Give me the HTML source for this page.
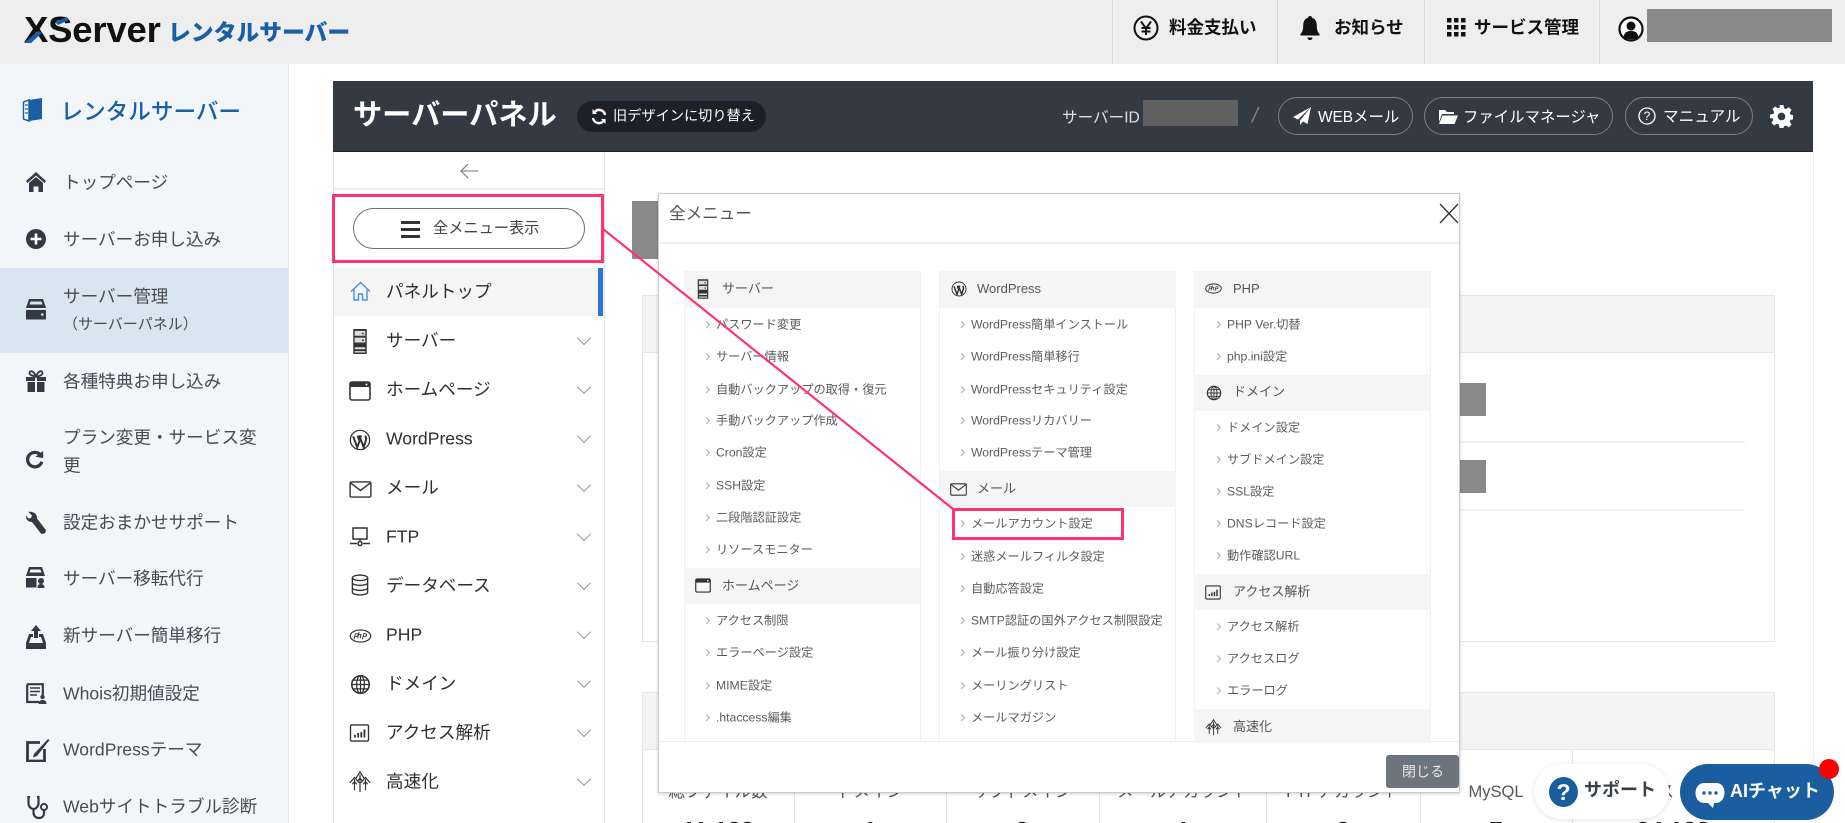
<!DOCTYPE html>
<html lang="ja"><head><meta charset="utf-8"><title>XServer</title>
<style>
html,body{margin:0;padding:0;width:1845px;height:823px;overflow:hidden;background:#fff}
body{position:relative;font-family:"Liberation Sans","Noto Sans CJK JP",sans-serif;color:#333}
.b,.t,.i,.h,svg.a{position:absolute}
.t,.i,.h{white-space:nowrap;transform:translateY(-50%);line-height:1.2}
.s{font-size:17.6px;color:#484c52;left:63px;margin-top:1px}
.n{font-size:17.6px;color:#2c2f33;left:386px;margin-top:1px}
.top{font-size:17.5px;font-weight:700;color:#111;margin-top:1px}
.wbtn{position:absolute;top:97px;height:36px;border:1px solid #7b8087;border-radius:19px;box-sizing:content-box}
.w{color:#fff}
.i{font-size:12.2px;color:#5c5c5c}
.i::before{content:"";position:absolute;left:-12.5px;top:50%;width:4px;height:4px;border-top:1px solid #aaa;border-right:1px solid #aaa;transform:translateY(-50%) rotate(45deg)}
.hd{position:absolute;width:237px;background:#f5f5f5}
.h{font-size:13px;color:#555}
.lab{font-size:16.5px;color:#555;transform:translate(-50%,-50%)}
.val{font-size:24px;font-weight:700;color:#222;transform:translate(-50%,-50%)}
.chev{position:absolute;left:579px;width:9px;height:9px;margin-top:-1px;border-right:1px solid #999;border-bottom:1px solid #999;transform:rotate(45deg)}
</style></head><body>
<svg width="0" height="0" style="position:absolute"><defs>
<symbol id="srv" viewBox="0 0 16 26"><path fill="#333" d="M1 0h14v26H1z"/><path fill="#ddd" d="M2.500 2h11v5h-11zM2.500 9h11v5h-11zM2.500 19h11v2h-11zM2.500 23h11v1.500h-11z"/><path fill="#333" d="M10 4h2v1.500h-2zM10 11h2v1.500h-2z"/></symbol>
<symbol id="win" viewBox="0 0 22 20"><rect x="1" y="1" width="20" height="18" rx="2" fill="none" stroke="#333" stroke-width="1.600"/><path fill="#333" d="M1 1h20v5H1z"/><circle cx="17.500" cy="3.500" r="1" fill="#fff"/></symbol>
<symbol id="wp" viewBox="0 0 24 24"><circle cx="12" cy="12" r="10.500" fill="none" stroke="#333" stroke-width="1.400"/><path d="M4.500 8 9 20 11.500 13 9.500 8M9 8h5M11.500 8 16 20l2.500-8c.7-2-.2-3.500-1-4.500" fill="none" stroke="#333" stroke-width="2.200"/></symbol>
<symbol id="mail" viewBox="0 0 24 18"><rect x="1" y="1" width="22" height="16" rx="1.500" fill="none" stroke="#333" stroke-width="1.500"/><path d="M1.500 2 12 10 22.500 2" fill="none" stroke="#333" stroke-width="1.500"/></symbol>
<symbol id="ftp" viewBox="0 0 20 20"><rect x="3" y="1" width="14" height="11" fill="none" stroke="#333" stroke-width="1.500"/><path d="M10 12v3M0 16.500h7M13 16.500h7" stroke="#333" stroke-width="1.500"/><circle cx="10" cy="16.500" r="2" fill="none" stroke="#333" stroke-width="1.500"/></symbol>
<symbol id="db" viewBox="0 0 20 24"><ellipse cx="10" cy="4" rx="8.500" ry="3" fill="none" stroke="#333" stroke-width="1.500"/><path d="M1.500 4v16c0 1.700 3.800 3 8.500 3s8.500-1.300 8.500-3V4M1.500 9.500c0 1.700 3.800 3 8.500 3s8.500-1.300 8.500-3M1.500 15c0 1.700 3.800 3 8.500 3s8.500-1.300 8.500-3" fill="none" stroke="#333" stroke-width="1.500"/></symbol>
<symbol id="php" viewBox="0 0 24 15"><ellipse cx="12" cy="7.500" rx="11" ry="6.500" fill="none" stroke="#333" stroke-width="1.300"/><path d="M5 11 6.500 5h2c1.500 0 1.500 3-1 3H6M10.500 3l-1.500 7M10 6h2.500l-.8 4M14 11l1.500-6h2c1.500 0 1.500 3-1 3H15" fill="none" stroke="#333" stroke-width="1"/></symbol>
<symbol id="glb" viewBox="0 0 24 24"><circle cx="12" cy="12" r="10" fill="none" stroke="#333" stroke-width="1.800"/><ellipse cx="12" cy="12" rx="4.500" ry="10" fill="none" stroke="#333" stroke-width="1.400"/><path d="M2 12h20M3.500 7h17M3.500 17h17M12 2v20" stroke="#333" stroke-width="1.400"/></symbol>
<symbol id="chart" viewBox="0 0 22 20"><rect x="1" y="1" width="20" height="18" rx="1.500" fill="none" stroke="#333" stroke-width="1.500"/><path fill="#333" d="M5 12h2v3H5zM8.500 10h2v5h-2zM12 9h2v6h-2zM15.500 6h2v9h-2z"/></symbol>
<symbol id="spd" viewBox="0 0 24 24"><path d="M1 13 6 7l5 6M7.500 8 12 1l4.500 7M13 13l5-6 5 6M6 9v12M12 4v19M18 9v12M3.500 14.500 6 11.500l2.500 3M9.500 11 12 7.500l2.500 3.500M15.500 14.500l2.500-3 2.500 3" fill="none" stroke="#333" stroke-width="1.300"/></symbol>
</defs></svg>

<!-- top bar -->
<div class="b" style="left:0;top:0;width:1845px;height:64px;background:#eee"></div>
<div class="b" style="left:1112px;top:0;width:1px;height:64px;background:#d8d8d8"></div>
<div class="b" style="left:1277px;top:0;width:1px;height:64px;background:#d8d8d8"></div>
<div class="b" style="left:1424px;top:0;width:1px;height:64px;background:#d8d8d8"></div>
<div class="b" style="left:1599px;top:0;width:1px;height:64px;background:#d8d8d8"></div>
<div class="t" style="left:24px;top:30px;font-size:36.5px;font-weight:700;color:#111;letter-spacing:-.2px">XServer</div>
<svg class="a" style="left:20px;top:14px" width="60" height="32" viewBox="0 0 60 32"><path d="M4 29 18 17l4 2L11 29z" fill="#1a5ea5"/><path d="M35 8 47 3l2 3-11 5z" fill="#1a5ea5"/></svg>
<div class="t" style="left:168px;top:33px;font-size:22.8px;font-weight:900;color:#1a5ea5">レンタルサーバー</div>

<svg class="a" style="left:1133px;top:15px" width="26" height="26" viewBox="0 0 26 26"><circle cx="13" cy="13" r="11.500" fill="none" stroke="#111" stroke-width="2"/><path d="M8 6.500l5 7 5-7M13 13.500V20M8.500 13h9M8.500 16.500h9" fill="none" stroke="#111" stroke-width="2"/></svg>
<div class="t top" style="left:1169px;top:27px">料金支払い</div>
<svg class="a" style="left:1300px;top:15px" width="20" height="26" viewBox="0 0 20 26"><path d="M10 1c1.200 0 2 .8 2 1.800 3.500 1 4.800 4 4.800 8 0 4 .7 6 2.700 8.200v1.500H.5V19c2-2.200 2.700-4.200 2.700-8.200s1.300-7 4.800-8C8 1.800 8.800 1 10 1zM7.500 22.500h5c0 1.500-1 2.500-2.500 2.500s-2.500-1-2.500-2.500z" fill="#111"/></svg>
<div class="t top" style="left:1334px;top:27px">お知らせ</div>
<svg class="a" style="left:1447px;top:18px" width="19" height="19" viewBox="0 0 19 19"><path fill="#111" d="M0 0h4.500v4.500H0zM7 0h4.500v4.500H7zM14 0h4.500v4.500H14zM0 7h4.500v4.500H0zM7 7h4.500v4.500H7zM14 7h4.500v4.500H14zM0 14h4.500v4.500H0zM7 14h4.500v4.500H7zM14 14h4.500v4.500H14z"/></svg>
<div class="t top" style="left:1474px;top:27px">サービス管理</div>
<svg class="a" style="left:1618px;top:16px" width="26" height="26" viewBox="0 0 26 26"><circle cx="13" cy="13" r="11.500" fill="#fff" stroke="#111" stroke-width="2.200"/><circle cx="13" cy="10" r="4.500" fill="#111"/><path d="M5.500 21c1-5 4-6 7.500-6s6.500 1 7.500 6c-4 3-11 3-15 0z" fill="#111"/></svg>
<div class="b" style="left:1647px;top:9px;width:185px;height:33px;background:#8a8a8a"></div>

<!-- sidebar -->
<div class="b" style="left:0;top:64px;width:288px;height:759px;background:#f2f6f9;border-right:1px solid #e6eaee"></div>
<div class="b" style="left:0;top:268px;width:288px;height:85px;background:#d9e6f2"></div>
<svg class="a" style="left:22px;top:97px" width="21" height="25" viewBox="0 0 21 25"><path d="M7 3 20 1v21L7 24z" fill="#1a5ea5"/><path d="M7 3 1.500 5v17L7 24z" fill="#fff" stroke="#1a5ea5" stroke-width="1.500"/><path d="M3 8h3M3 12h3M3 16h3" stroke="#1a5ea5" stroke-width="1.300"/></svg>
<div class="t" style="left:60.500px;top:112px;font-size:22.6px;font-weight:500;color:#1a5ea5">レンタルサーバー</div>

<svg class="a" style="left:26px;top:172px" width="20" height="20" viewBox="0 0 20 20"><path fill="#343a43" d="M10 0 20 9l-1.500 2L10 3.500 1.500 11 0 9zM3 11l7-6 7 6v9h-4.500v-5.500h-5V20H3z"/></svg>
<div class="t s" style="top:182px">トップページ</div>
<svg class="a" style="left:26px;top:229px" width="20" height="20" viewBox="0 0 20 20"><circle cx="10" cy="10" r="10" fill="#343a43"/><path d="M10 4.500v11M4.500 10h11" stroke="#fff" stroke-width="2.600"/></svg>
<div class="t s" style="top:239px">サーバーお申し込み</div>
<svg class="a" style="left:26px;top:299px" width="20" height="22" viewBox="0 0 20 22"><path fill="#343a43" d="M3 0h14l3 9H0zM0 11h20v9.500H0z"/><path fill="#d9e6f2" d="M4.500 2.500h11l1 3h-13z"/><path fill="#d9e6f2" d="M15 14.500h2.500v2H15z"/></svg>
<div class="t s" style="top:296px">サーバー管理</div>
<div class="t s" style="top:324px;left:63px;font-size:15px">（サーバーパネル）</div>
<svg class="a" style="left:26px;top:370px" width="20" height="22" viewBox="0 0 20 22"><path fill="#343a43" d="M0 7h9v4H0zM11 7h9v4h-9zM1.500 12H9v10H1.500zM11 12h7.500v10H11z"/><path d="M10 6.500C8 1 4 0 3.500 2.500S7 6 10 6.500c3 0 7-1.500 6.500-4S12 1 10 6.500z" fill="none" stroke="#343a43" stroke-width="1.800"/></svg>
<div class="t s" style="top:381px">各種特典お申し込み</div>
<svg class="a" style="left:26px;top:450px" width="18" height="19" viewBox="0 0 19 21"><path d="M15.500 5.500A8 8 0 1 0 17 13" fill="none" stroke="#343a43" stroke-width="3.600"/><path d="M10 7.500 18.500 9V1z" fill="#343a43"/></svg>
<div class="t s" style="top:437px">プラン変更・サービス変</div>
<div class="t s" style="top:465px">更</div>
<svg class="a" style="left:26px;top:511px" width="20" height="23" viewBox="0 0 20 23"><path d="M2.500 1 6 4.500 5 7 2.500 7.500 0 4.500C-.5 8 2 11 6 11l8.500 11c1 1.200 2.500 1.200 4 .2s1.800-2.500 1-3.700L11 7.500C11.500 3 7 0 2.500 1z" fill="#343a43"/></svg>
<div class="t s" style="top:522px">設定おまかせサポート</div>
<svg class="a" style="left:26px;top:567px" width="20" height="22" viewBox="0 0 20 22"><path fill="#343a43" d="M3 0h13l3 9H0zM0 11h10.500v9.500H0z"/><path fill="#f2f6f9" d="M4.500 2.500h10l1 3h-12z"/><circle cx="15" cy="14" r="3" fill="#343a43"/><path fill="#343a43" d="M11.500 21c0-3 1.500-4 3.500-4s3.500 1 3.500 4z"/></svg>
<div class="t s" style="top:578px">サーバー移転代行</div>
<svg class="a" style="left:26px;top:625px" width="20" height="24" viewBox="0 0 20 24"><path fill="#343a43" d="M10 0l5 6h-3v7H8V6H5zM3 9h4v3H5l-2 6h14l-2-6h-2V9h4l3 9v6H0v-6z"/></svg>
<div class="t s" style="top:635px">新サーバー簡単移行</div>
<svg class="a" style="left:26px;top:683px" width="21" height="21" viewBox="0 0 21 21"><path d="M1.200 1.200h15.600v11M13 19H1.200V1.200" fill="none" stroke="#343a43" stroke-width="2.200"/><path d="M4 5h10M4 8.500h10M4 12h7" stroke="#343a43" stroke-width="1.500"/><circle cx="16.500" cy="14" r="2.200" fill="#343a43"/><path fill="#343a43" d="M12.500 21c0-3 2-4 4-4s4 1 4 4z"/></svg>
<div class="t s" style="top:693px">Whois初期値設定</div>
<svg class="a" style="left:26px;top:738px" width="24" height="24" viewBox="0 0 24 24"><path d="M14 4.500H1.500V23h17V11" fill="none" stroke="#343a43" stroke-width="2.800"/><path d="M8 16 22 1l1.500 1L11 18l-4 1.500z" fill="#343a43"/></svg>
<div class="t s" style="top:749px">WordPressテーマ</div>
<svg class="a" style="left:27px;top:796px" width="21" height="24" viewBox="0 0 21 24"><path d="M3 1H1.500v6c0 3.500 2.500 6 5 6s5-2.500 5-6V1H10M6.500 13v3.500c0 3 2 5.500 5.500 5.500s5-2.500 5-5v-3" fill="none" stroke="#343a43" stroke-width="2.200"/><circle cx="17" cy="11" r="3" fill="none" stroke="#343a43" stroke-width="2"/></svg>
<div class="t s" style="top:806px">Webサイトトラブル診断</div>

<!-- dark panel -->
<div class="b" style="left:333px;top:81px;width:1480px;height:71px;background:#343a43;border-bottom:1px solid #23272d;box-sizing:border-box"></div>
<div class="t w" style="left:353px;top:116px;font-size:29.2px;font-weight:700">サーバーパネル</div>
<div class="b" style="left:577px;top:101px;width:189px;height:31px;border-radius:16px;background:#1d2127"></div>
<svg class="a" style="left:590px;top:107px" width="18" height="19" viewBox="0 0 18 19"><path d="M15 8a6 6 0 0 0-10-3.500M3 11a6 6 0 0 0 10 3.500" fill="none" stroke="#fff" stroke-width="2.400"/><path d="M2.500 2 7 7H2.500zM15.500 17 11 12h4.500z" fill="#fff"/></svg>
<div class="t w" style="left:613px;top:117px;font-size:14.2px">旧デザインに切り替え</div>
<div class="t" style="left:1062px;top:118.500px;font-size:15.6px;color:#dfe1e4">サーバーID</div>
<div class="b" style="left:1143px;top:100px;width:95px;height:26px;background:#606060"></div>
<div class="t" style="left:1252px;top:116px;font-size:21px;font-style:italic;color:#7b8087">/</div>
<div class="wbtn" style="left:1278px;width:133px"></div>
<svg class="a" style="left:1293px;top:107px" width="18" height="18" viewBox="0 0 18 18"><path d="M18 0 0 10l5 2.500L18 0 7 13.500V18l3-3.500 4.500 2.500z" fill="#fff"/></svg>
<div class="t w" style="left:1318px;top:118px;font-size:15.4px">WEBメール</div>
<div class="wbtn" style="left:1424px;width:187px"></div>
<svg class="a" style="left:1438px;top:109px" width="20" height="16" viewBox="0 0 20 16"><path d="M1 1h6l2 2h7v2H4L1 13zM4.500 6.500H20L16.500 15H1z" fill="#fff"/></svg>
<div class="t w" style="left:1463px;top:118px;font-size:15.4px">ファイルマネージャ</div>
<div class="wbtn" style="left:1625px;width:126px"></div>
<svg class="a" style="left:1638px;top:107px" width="18" height="18" viewBox="0 0 18 18"><circle cx="9" cy="9" r="8" fill="none" stroke="#fff" stroke-width="1.300"/><text x="9" y="13" font-size="12" text-anchor="middle" fill="#fff" font-family="Liberation Sans">?</text></svg>
<div class="t w" style="left:1663px;top:118px;font-size:15.6px">マニュアル</div>
<svg class="a" style="left:1770px;top:105px" width="23" height="23" viewBox="0 0 24 24"><path fill="#fff" fill-rule="evenodd" d="M10 0h4l.7 3.400 2 .8L19.700 2.300l2.800 2.800-1.900 3 .8 2 3.600.7v4l-3.600.7-.8 2 1.900 3-2.800 2.800-3-1.900-2 .8L14 24h-4l-.7-3.700-2-.8-3 1.900-2.800-2.800 1.900-3-.8-2L0 14v-4l3.600-.7.800-2-1.900-3L5.300 1.500l3 1.900 2-.8zM12 8a4 4 0 1 0 0 8 4 4 0 0 0 0-8z"/></svg>

<!-- left nav -->
<div class="b" style="left:333px;top:152px;width:270px;height:671px;border-left:1px solid #e3e3e3;border-right:1px solid #e3e3e3"></div>
<div class="b" style="left:1813px;top:152px;width:1px;height:671px;background:#ececec"></div>
<svg class="a" style="left:460px;top:163px" width="18" height="16" viewBox="0 0 18 16"><path d="M8 1 1 8l7 7M1 8h17" fill="none" stroke="#777" stroke-width="1.100"/></svg>
<div class="b" style="left:334px;top:188px;width:270px;height:2px;background:#eee"></div>
<div class="b" style="left:353px;top:208px;width:232px;height:41px;box-sizing:border-box;border:1px solid #6b6f75;border-radius:21px;background:#fff"></div>
<div class="b" style="left:401px;top:221px;width:19px;height:3px;background:#333"></div>
<div class="b" style="left:401px;top:228px;width:19px;height:3px;background:#333"></div>
<div class="b" style="left:401px;top:235px;width:19px;height:3px;background:#333"></div>
<div class="t" style="left:433px;top:229px;font-size:15.2px;color:#444">全メニュー表示</div>

<div class="b" style="left:334px;top:268px;width:270px;height:48px;background:#f5f5f5"></div>
<div class="b" style="left:598px;top:268px;width:5px;height:48px;background:#2a76d8"></div>
<svg class="a" style="left:350px;top:281px" width="21" height="20" viewBox="0 0 21 20"><path d="M1 10.500 10.500 1.500 20 10.500M4 8.500V19h4.500v-6h4v6H17V8.500" fill="none" stroke="#4a90d9" stroke-width="1.400"/></svg>
<div class="t n" style="top:291px">パネルトップ</div>

<svg class="a" style="left:352px;top:329px" width="16" height="25"><use href="#srv"/></svg>
<div class="t n" style="top:340px">サーバー</div><div class="chev" style="top:334px"></div>
<svg class="a" style="left:349px;top:381px" width="22" height="20"><use href="#win"/></svg>
<div class="t n" style="top:389px">ホームページ</div><div class="chev" style="top:383px"></div>
<svg class="a" style="left:349px;top:429px" width="22" height="22"><use href="#wp"/></svg>
<div class="t n" style="top:437.500px">WordPress</div><div class="chev" style="top:432px"></div>
<svg class="a" style="left:349px;top:481px" width="23" height="17"><use href="#mail"/></svg>
<div class="t n" style="top:487px">メール</div><div class="chev" style="top:481px"></div>
<svg class="a" style="left:350px;top:527px" width="20" height="20"><use href="#ftp"/></svg>
<div class="t n" style="top:536px">FTP</div><div class="chev" style="top:530px"></div>
<svg class="a" style="left:351px;top:574px" width="18" height="22"><use href="#db"/></svg>
<div class="t n" style="top:585px">データベース</div><div class="chev" style="top:579px"></div>
<svg class="a" style="left:349px;top:629px" width="23" height="14"><use href="#php"/></svg>
<div class="t n" style="top:634px">PHP</div><div class="chev" style="top:628px"></div>
<svg class="a" style="left:350px;top:674px" width="21" height="21"><use href="#glb"/></svg>
<div class="t n" style="top:683px">ドメイン</div><div class="chev" style="top:677px"></div>
<svg class="a" style="left:349px;top:724px" width="21" height="18"><use href="#chart"/></svg>
<div class="t n" style="top:732px">アクセス解析</div><div class="chev" style="top:726px"></div>
<svg class="a" style="left:349px;top:771px" width="22" height="22"><use href="#spd"/></svg>
<div class="t n" style="top:781px">高速化</div><div class="chev" style="top:775px"></div>

<!-- background content -->
<div class="b" style="left:632px;top:201px;width:27px;height:58px;background:#8a8a8a"></div>
<div class="b" style="left:642px;top:295px;width:1133px;height:347px;box-sizing:border-box;border:1px solid #e6e6e6"></div>
<div class="b" style="left:643px;top:296px;width:1131px;height:56px;background:#f4f4f4;border-bottom:1px solid #e8e8e8"></div>
<div class="b" style="left:1455px;top:383px;width:31px;height:33px;background:#8a8a8a"></div>
<div class="b" style="left:1455px;top:460px;width:31px;height:33px;background:#8a8a8a"></div>
<div class="b" style="left:1455px;top:441px;width:290px;height:2px;background:#f2f2f2"></div>
<div class="b" style="left:1455px;top:509px;width:290px;height:2px;background:#f4f4f4"></div>
<div class="b" style="left:642px;top:692px;width:1133px;height:131px;box-sizing:border-box;border:1px solid #e6e6e6;border-bottom:0"></div>
<div class="b" style="left:643px;top:693px;width:1131px;height:56px;background:#f4f4f4;border-bottom:1px solid #e8e8e8"></div>
<div class="b" style="left:794px;top:750px;width:1px;height:73px;background:#e6e6e6"></div>
<div class="b" style="left:946px;top:750px;width:1px;height:73px;background:#e6e6e6"></div>
<div class="b" style="left:1099px;top:750px;width:1px;height:73px;background:#e6e6e6"></div>
<div class="b" style="left:1266px;top:750px;width:1px;height:73px;background:#e6e6e6"></div>
<div class="b" style="left:1420px;top:750px;width:1px;height:73px;background:#e6e6e6"></div>
<div class="b" style="left:1572px;top:750px;width:1px;height:73px;background:#e6e6e6"></div>
<div class="t lab" style="left:718px;top:793px">総ファイル数</div>
<div class="t lab" style="left:870px;top:793px">ドメイン</div>
<div class="t lab" style="left:1022px;top:793px">サブドメイン</div>
<div class="t lab" style="left:1183px;top:793px">メールアカウント</div>
<div class="t lab" style="left:1343px;top:793px">FTPアカウント</div>
<div class="t lab" style="left:1496px;top:793px">MySQL</div>
<div class="t lab" style="left:1625px;top:793px">データベース</div>
<div class="t val" style="left:718px;top:832px">11,133</div>
<div class="t val" style="left:870px;top:832px">1</div>
<div class="t val" style="left:1022px;top:832px">3</div>
<div class="t val" style="left:1183px;top:832px">1</div>
<div class="t val" style="left:1343px;top:832px">3</div>
<div class="t val" style="left:1496px;top:832px">7</div>
<div class="t val" style="left:1673px;top:832px">34,133</div>

<!-- modal -->
<div class="b" style="left:658px;top:193px;width:802px;height:600px;box-sizing:border-box;background:#fff;border:1px solid #ccc;box-shadow:0 1px 3px rgba(0,0,0,.18)"></div>
<div class="t" style="left:669px;top:214px;font-size:16.6px;color:#555">全メニュー</div>
<svg class="a" style="left:1439px;top:203px" width="20" height="21" viewBox="0 0 20 21"><path d="M1 1 19 20M19 1 1 20" stroke="#333" stroke-width="1.300" fill="none"/></svg>
<div class="b" style="left:659px;top:242px;width:800px;height:2px;background:#f0f0f0"></div>

<div class="b" style="left:684px;top:271px;width:237px;height:470px;box-sizing:border-box;border:1px solid #f0f0f0;border-bottom:0"></div>
<div class="b" style="left:939px;top:271px;width:237px;height:470px;box-sizing:border-box;border:1px solid #f0f0f0;border-bottom:0"></div>
<div class="b" style="left:1194px;top:271px;width:237px;height:470px;box-sizing:border-box;border:1px solid #f0f0f0;border-bottom:0"></div>

<!-- col1 -->
<div class="hd" style="left:684px;top:271px;height:37px"></div>
<svg class="a" style="left:697px;top:279px" width="12" height="20"><use href="#srv"/></svg>
<div class="t h" style="left:722px;top:289px">サーバー</div>
<div class="t i" style="left:716px;top:325px">パスワード変更</div>
<div class="t i" style="left:716px;top:357px">サーバー情報</div>
<div class="t i" style="left:716px;top:390px">自動バックアップの取得・復元</div>
<div class="t i" style="left:716px;top:421px">手動バックアップ作成</div>
<div class="t i" style="left:716px;top:453px">Cron設定</div>
<div class="t i" style="left:716px;top:486px">SSH設定</div>
<div class="t i" style="left:716px;top:518px">二段階認証設定</div>
<div class="t i" style="left:716px;top:550px">リソースモニター</div>
<div class="hd" style="left:684px;top:568px;height:36px"></div>
<svg class="a" style="left:695px;top:578px" width="16" height="15"><use href="#win"/></svg>
<div class="t h" style="left:722px;top:586px">ホームページ</div>
<div class="t i" style="left:716px;top:621px">アクセス制限</div>
<div class="t i" style="left:716px;top:653px">エラーページ設定</div>
<div class="t i" style="left:716px;top:686px">MIME設定</div>
<div class="t i" style="left:716px;top:718px">.htaccess編集</div>

<!-- col2 -->
<div class="hd" style="left:939px;top:271px;height:37px"></div>
<svg class="a" style="left:951px;top:281px" width="16" height="16"><use href="#wp"/></svg>
<div class="t h" style="left:977px;top:289px">WordPress</div>
<div class="t i" style="left:971px;top:325px">WordPress簡単インストール</div>
<div class="t i" style="left:971px;top:357px">WordPress簡単移行</div>
<div class="t i" style="left:971px;top:390px">WordPressセキュリティ設定</div>
<div class="t i" style="left:971px;top:421px">WordPressリカバリー</div>
<div class="t i" style="left:971px;top:453px">WordPressテーマ管理</div>
<div class="hd" style="left:939px;top:471px;height:36px"></div>
<svg class="a" style="left:950px;top:483px" width="17" height="13"><use href="#mail"/></svg>
<div class="t h" style="left:977px;top:489px">メール</div>
<div class="t i" style="left:971px;top:524px">メールアカウント設定</div>
<div class="t i" style="left:971px;top:557px">迷惑メールフィルタ設定</div>
<div class="t i" style="left:971px;top:589px">自動応答設定</div>
<div class="t i" style="left:971px;top:621px">SMTP認証の国外アクセス制限設定</div>
<div class="t i" style="left:971px;top:653px">メール振り分け設定</div>
<div class="t i" style="left:971px;top:686px">メーリングリスト</div>
<div class="t i" style="left:971px;top:718px">メールマガジン</div>

<!-- col3 -->
<div class="hd" style="left:1194px;top:271px;height:37px"></div>
<svg class="a" style="left:1205px;top:283px" width="17" height="11"><use href="#php"/></svg>
<div class="t h" style="left:1233px;top:289px">PHP</div>
<div class="t i" style="left:1227px;top:325px">PHP Ver.切替</div>
<div class="t i" style="left:1227px;top:357px">php.ini設定</div>
<div class="hd" style="left:1194px;top:375px;height:36px"></div>
<svg class="a" style="left:1206px;top:385px" width="16" height="16"><use href="#glb"/></svg>
<div class="t h" style="left:1233px;top:392px">ドメイン</div>
<div class="t i" style="left:1227px;top:428px">ドメイン設定</div>
<div class="t i" style="left:1227px;top:460px">サブドメイン設定</div>
<div class="t i" style="left:1227px;top:492px">SSL設定</div>
<div class="t i" style="left:1227px;top:524px">DNSレコード設定</div>
<div class="t i" style="left:1227px;top:556px">動作確認URL</div>
<div class="hd" style="left:1194px;top:574px;height:36px"></div>
<svg class="a" style="left:1205px;top:585px" width="16" height="15"><use href="#chart"/></svg>
<div class="t h" style="left:1233px;top:592px">アクセス解析</div>
<div class="t i" style="left:1227px;top:627px">アクセス解析</div>
<div class="t i" style="left:1227px;top:659px">アクセスログ</div>
<div class="t i" style="left:1227px;top:691px">エラーログ</div>
<div class="hd" style="left:1194px;top:709px;height:32px"></div>
<svg class="a" style="left:1205px;top:719px" width="17" height="17"><use href="#spd"/></svg>
<div class="t h" style="left:1233px;top:727px">高速化</div>

<div class="b" style="left:659px;top:741px;width:800px;height:51px;background:#fff;border-top:1px solid #eee;box-sizing:border-box"></div>
<div class="b" style="left:1386px;top:755px;width:73px;height:33px;background:#6c757d;border-radius:3px"></div>
<div class="t" style="left:1402px;top:772px;font-size:14px;color:#e8e8e8">閉じる</div>

<!-- annotations -->
<svg class="a" style="left:0;top:0" width="1845" height="823"><path d="M603 229 953 509" stroke="#ff3370" stroke-width="2.200" fill="none"/></svg>
<div class="b" style="left:332px;top:194px;width:272px;height:69px;box-sizing:border-box;border:3px solid #ff3370"></div>
<div class="b" style="left:952px;top:508px;width:172px;height:32px;box-sizing:border-box;border:3px solid #ff3370"></div>

<!-- floats -->
<div class="b" style="left:1534px;top:764px;width:135px;height:55px;border-radius:28px;background:#fff;box-shadow:0 1px 5px rgba(0,0,0,.12)"></div>
<svg class="a" style="left:1549px;top:777px" width="29" height="30" viewBox="0 0 29 30"><ellipse cx="14.500" cy="15" rx="14.500" ry="15" fill="#1a5ea0"/><text x="14.500" y="23" font-size="23" font-weight="700" text-anchor="middle" fill="#fff" font-family="Liberation Sans">?</text></svg>
<div class="t" style="left:1584px;top:791px;font-size:18px;font-weight:700;color:#3a3f46">サポート</div>
<div class="b" style="left:1680px;top:764px;width:154px;height:56px;border-radius:28px;background:#1a5ea0"></div>
<svg class="a" style="left:1695px;top:782px" width="30" height="27" viewBox="0 0 30 27"><path d="M9 1h12c5 0 8.500 3.500 8.500 9.500S26 21 21 21h-2l-1 5-5-5H9c-5 0-8.500-4.500-8.500-10S4 1 9 1z" fill="#fff"/><circle cx="9" cy="11" r="1.700" fill="#1a5ea0"/><circle cx="15" cy="11" r="1.700" fill="#1a5ea0"/><circle cx="21" cy="11" r="1.700" fill="#1a5ea0"/></svg>
<div class="t" style="left:1730px;top:792px;font-size:18px;font-weight:700;color:#fff">AIチャット</div>
<div class="b" style="left:1819px;top:759px;width:20px;height:20px;border-radius:50%;background:#f00"></div>
</body></html>
